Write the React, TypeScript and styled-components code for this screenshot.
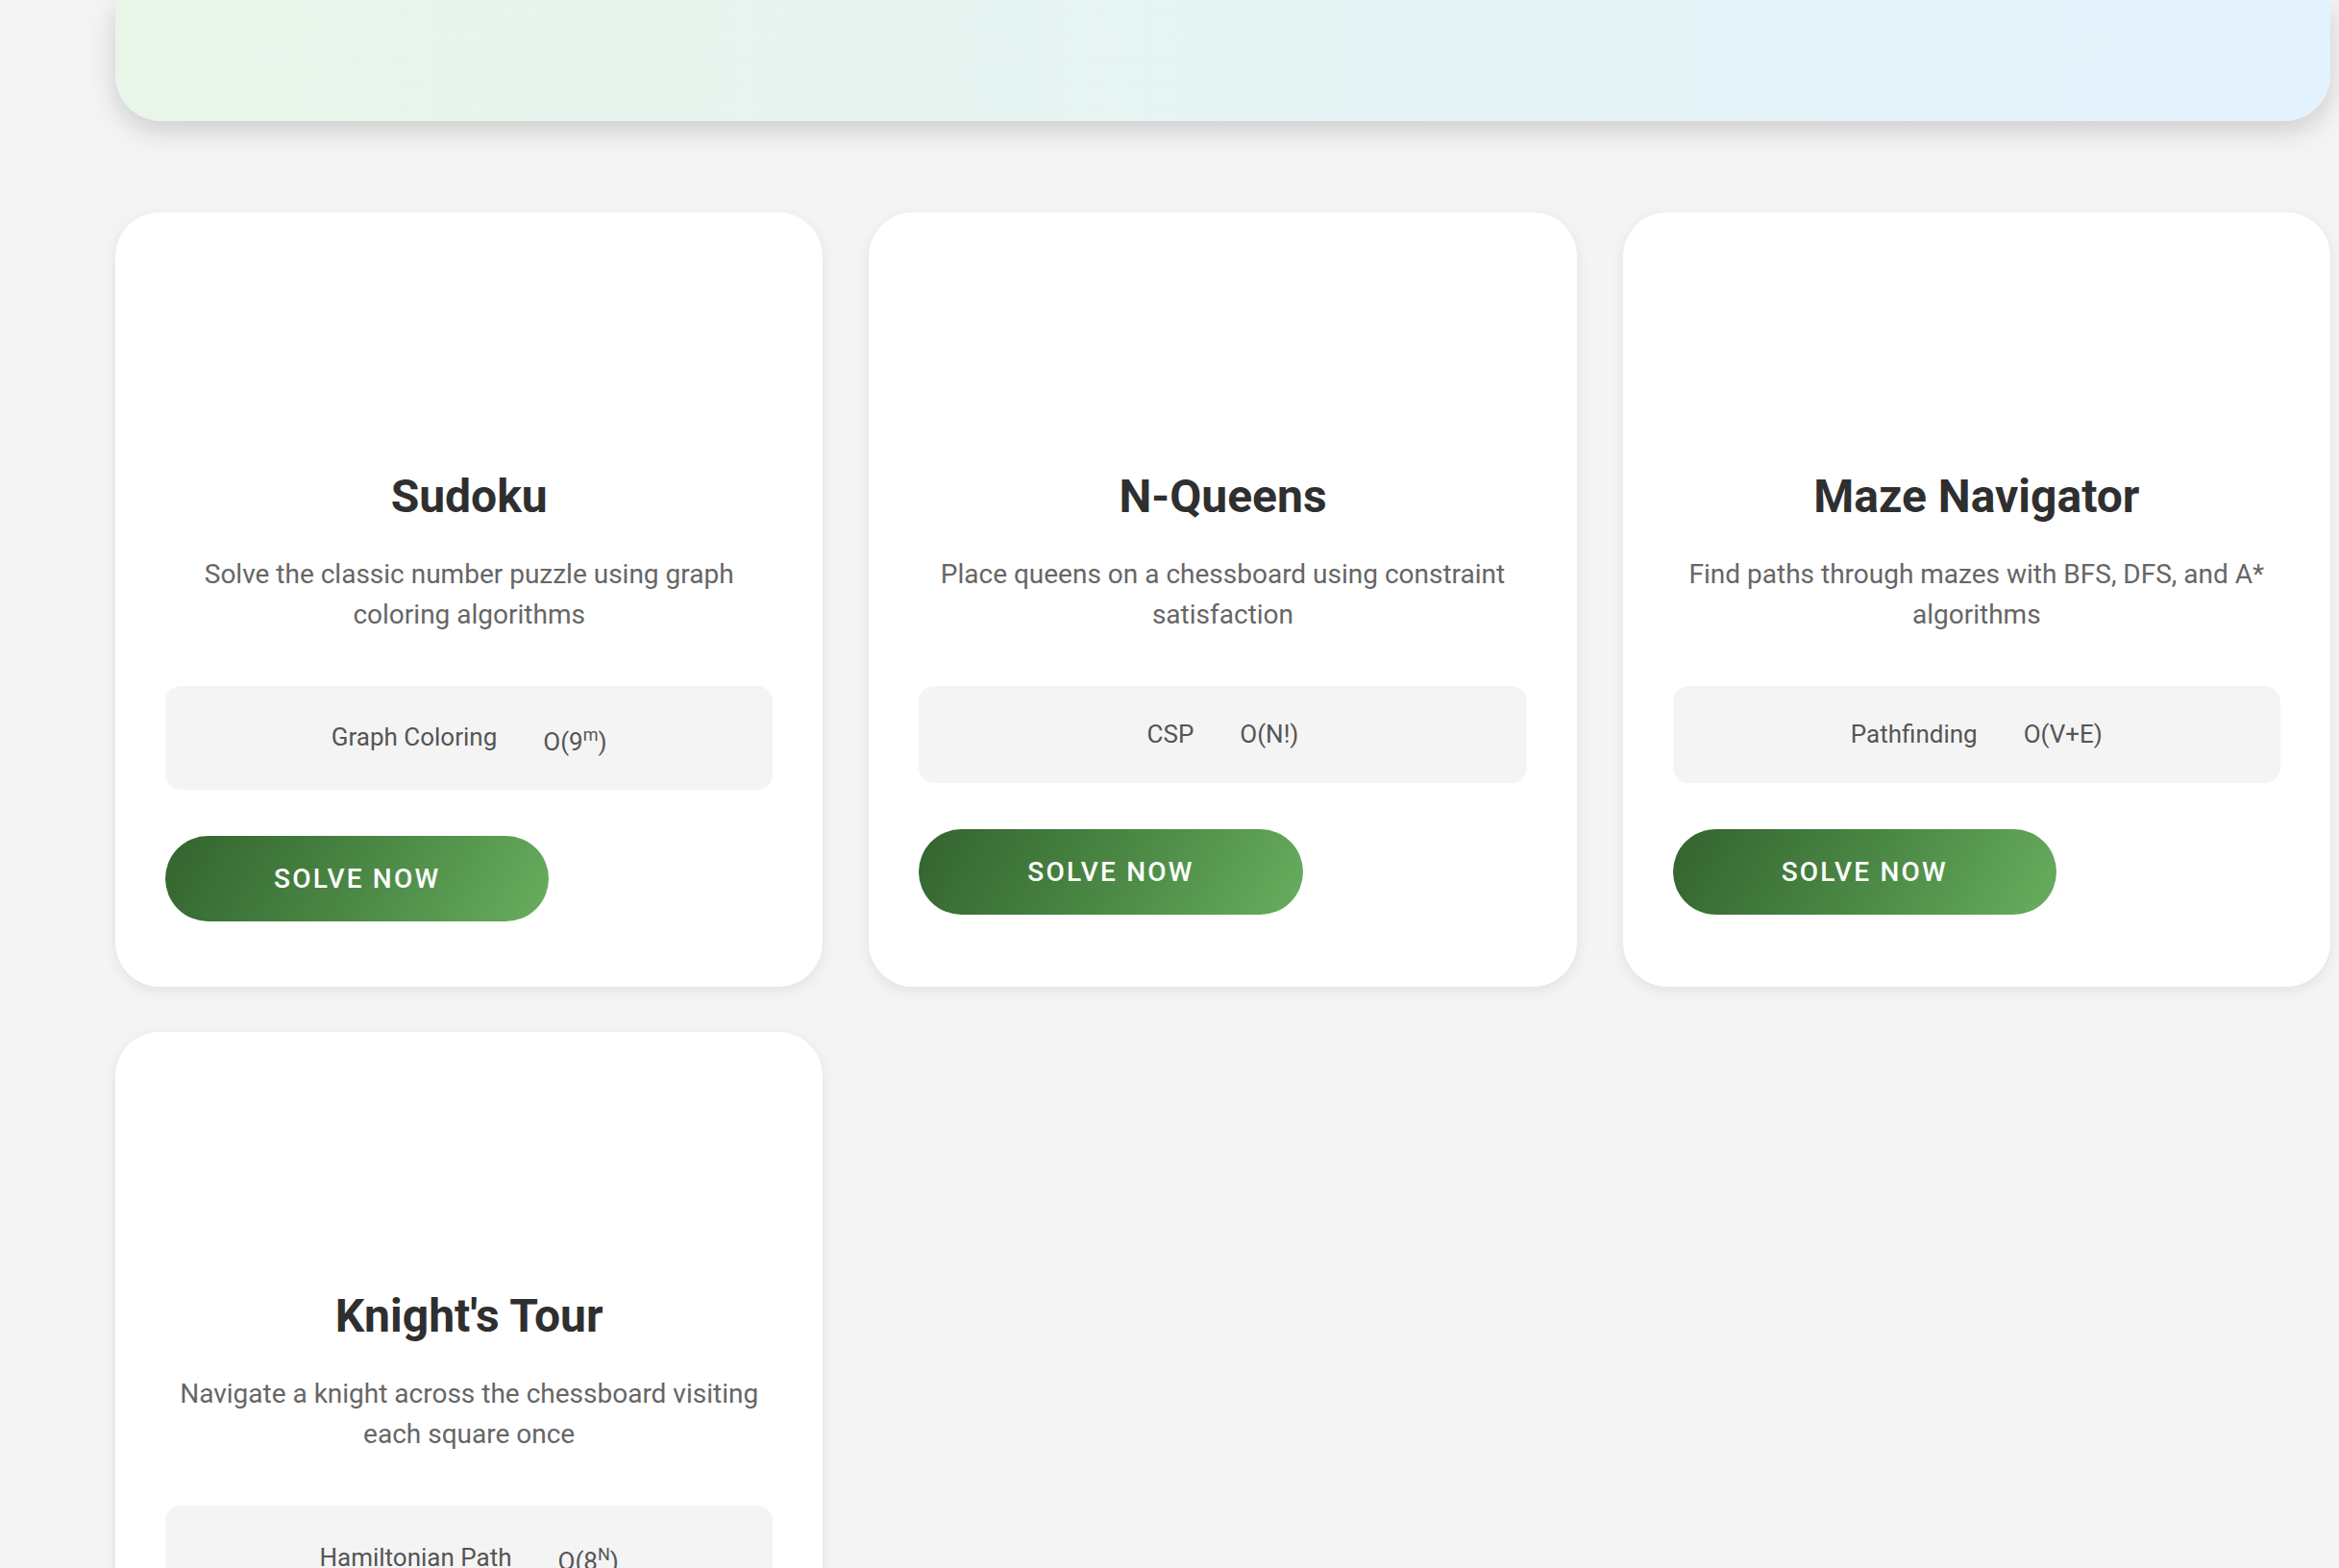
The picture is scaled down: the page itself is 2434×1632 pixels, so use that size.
import React from "react";
import styled, { createGlobalStyle } from "styled-components";

const GlobalStyle = createGlobalStyle`
  * { box-sizing: border-box; }
  html, body {
    margin: 0;
    padding: 0;
    background: #f4f4f4;
    font-family: Roboto, "Noto Sans", "Liberation Sans", sans-serif;
  }
`;

const Page = styled.div`
  padding: 0 9px 80px 120px;
  width: 2434px;
`;

const Hero = styled.header`
  height: 126px;
  border-radius: 0 0 48px 48px;
  background: linear-gradient(90deg, #e8f5e9 0%, #e3f2fd 100%);
  box-shadow: 0 10px 28px rgba(0, 0, 0, 0.16);
`;

const Grid = styled.main`
  margin-top: 95px;
  display: grid;
  grid-template-columns: repeat(3, 1fr);
  gap: 47px 48px;
`;

const Card = styled.article`
  background: #ffffff;
  border-radius: 46px;
  padding: 52px 52px 68px;
  box-shadow: 0 4px 14px rgba(0, 0, 0, 0.08);
  display: flex;
  flex-direction: column;
  text-align: center;
`;

const IconSlot = styled.div`
  height: 215px;
`;

const Title = styled.h2`
  margin: 0;
  font-size: 48px;
  line-height: 1.2;
  font-weight: 700;
  color: #2f2f2f;
`;

const Description = styled.p`
  margin: 31px 0 53px;
  font-size: 28px;
  line-height: 42px;
  color: #666666;
`;

const Info = styled.div`
  background: #f4f4f4;
  border-radius: 16px;
  padding: 32px;
  display: flex;
  justify-content: center;
  align-items: center;
  gap: 48px;
  font-size: 26px;
  line-height: 37px;
  color: #555555;
`;

const Sup = styled.sup`
  font-size: 18px;
`;

const SolveButton = styled.button`
  margin-top: 48px;
  align-self: flex-start;
  border: none;
  border-radius: 50px;
  padding: 27px 113px;
  background: linear-gradient(120deg, #33632e 0%, #4a8744 50%, #68ae5f 100%);
  color: #ffffff;
  font-family: Roboto, "Noto Sans", "Liberation Sans", sans-serif;
  font-size: 28px;
  line-height: 35px;
  font-weight: 500;
  letter-spacing: 2.2px;
  text-transform: uppercase;
  cursor: pointer;
`;

type Puzzle = {
  title: string;
  description: string;
  algorithm: string;
  complexity: React.ReactNode;
};

const puzzles: Puzzle[] = [
  {
    title: "Sudoku",
    description: "Solve the classic number puzzle using graph coloring algorithms",
    algorithm: "Graph Coloring",
    complexity: (
      <>
        O(9<Sup>m</Sup>)
      </>
    ),
  },
  {
    title: "N-Queens",
    description: "Place queens on a chessboard using constraint satisfaction",
    algorithm: "CSP",
    complexity: "O(N!)",
  },
  {
    title: "Maze Navigator",
    description: "Find paths through mazes with BFS, DFS, and A* algorithms",
    algorithm: "Pathfinding",
    complexity: "O(V+E)",
  },
  {
    title: "Knight's Tour",
    description: "Navigate a knight across the chessboard visiting each square once",
    algorithm: "Hamiltonian Path",
    complexity: (
      <>
        O(8<Sup>N</Sup>)
      </>
    ),
  },
];

export default function App() {
  return (
    <>
      <GlobalStyle />
      <Page>
        <Hero />
        <Grid>
          {puzzles.map((p) => (
            <Card key={p.title}>
              <IconSlot />
              <Title>{p.title}</Title>
              <Description>{p.description}</Description>
              <Info>
                <span>{p.algorithm}</span>
                <span>{p.complexity}</span>
              </Info>
              <SolveButton>Solve Now</SolveButton>
            </Card>
          ))}
        </Grid>
      </Page>
    </>
  );
}
